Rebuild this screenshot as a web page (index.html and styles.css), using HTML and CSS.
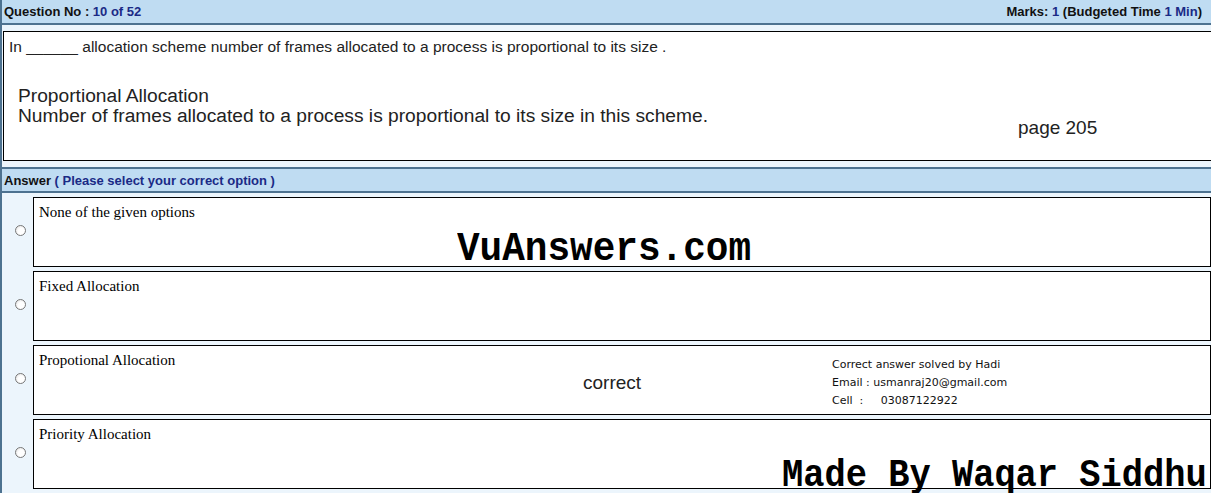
FILE: index.html
```html
<!DOCTYPE html>
<html>
<head>
<meta charset="utf-8">
<link rel="stylesheet" href="styles.css">
</head>
<body>
<div class="page">
  <div class="bar head">
    <span>Question No : <span class="hl">10 of 52</span></span>
    <span>Marks: <span class="hl">1</span> (Budgeted Time <span class="hl">1 Min</span>)</span>
  </div>
  <div class="qwrap">
    <div class="qbox">
      <div class="qline">In ______ allocation scheme number of frames allocated to a process is proportional to its size .</div>
      <div class="expl">
        <div>Proportional Allocation</div>
        <div>Number of frames allocated to a process is proportional to its size in this scheme.</div>
      </div>
      <div class="pageref">page 205</div>
    </div>
  </div>
  <div class="bar ans">
    <span>Answer <span class="hl">( Please select your correct option )</span></span>
  </div>
  <div class="options">
    <div class="opt">
      <span class="radio"></span>
      <div class="obox">
        <div class="otext">None of the given options</div>
        <div class="brand">VuAnswers.com</div>
      </div>
    </div>
    <div class="opt">
      <span class="radio"></span>
      <div class="obox"><div class="otext">Fixed Allocation</div></div>
    </div>
    <div class="opt">
      <span class="radio"></span>
      <div class="obox">
        <div class="otext">Propotional Allocation</div>
        <div class="correct">correct</div>
        <div class="credit">
          <div>Correct answer solved by Hadi</div>
          <div>Email : usmanraj20@gmail.com</div>
          <div>Cell&nbsp; :&nbsp;&nbsp;&nbsp;&nbsp; 03087122922</div>
        </div>
      </div>
    </div>
    <div class="opt">
      <span class="radio"></span>
      <div class="obox"><div class="otext">Priority Allocation</div></div>
    </div>
  </div>
  <div class="made">Made By Waqar Siddhu</div>
</div>
</body>
</html>
```

FILE: styles.css
```css
html, body {
  margin: 0;
  padding: 0;
  overflow: hidden;
}
body {
  background: #ecf5fc;
  width: 1211px;
  height: 493px;
}
.page {
  position: relative;
  width: 1211px;
  height: 493px;
  border-left: 2px solid #4d7290;
  box-sizing: border-box;
  background: #ecf5fc;
  overflow: hidden;
}
.bar {
  display: flex;
  justify-content: space-between;
  align-items: center;
  background: #bfdcf2;
  border-bottom: 2px solid #4d7290;
  font-family: "Liberation Sans", Arial, sans-serif;
  font-weight: bold;
  font-size: 13px;
  color: #111;
  padding: 0 9px 0 2px;
}
.bar .hl { color: #1a2a86; }
.head { height: 23px; }
.qwrap {
  padding: 6px 0 6px 1px;
}
.qbox {
  position: relative;
  width: 1220px;
  height: 128px;
  background: #fff;
  border: 1px solid #000;
  font-family: "Liberation Sans", Arial, sans-serif;
  color: #222;
}
.qline {
  font-size: 15.5px;
  padding: 6px 0 0 5px;
  line-height: 17px;
}
.expl {
  font-size: 19.2px;
  line-height: 20px;
  padding: 31px 0 0 14px;
}
.pageref {
  position: absolute;
  left: 1014px;
  top: 85px;
  font-size: 19px;
}
.ans {
  height: 22px;
  border-top: 2px solid #4d7290;
}
.options {
  display: flex;
  flex-direction: column;
  gap: 4px;
  padding-top: 4px;
}
.opt {
  display: flex;
  align-items: flex-start;
  height: 70px;
}
.radio {
  display: block;
  width: 9px;
  height: 9px;
  margin: 28px 7px 0 13px;
  border-radius: 50%;
  border: 1px solid #777;
  background: radial-gradient(circle at 60% 60%, #fff 40%, #ddd 100%);
  flex: none;
}
.obox {
  position: relative;
  width: 1220px;
  height: 68px;
  border: 1px solid #000;
  background: #fff;
  box-sizing: content-box;
  font-family: "Liberation Serif", "Times New Roman", serif;
  font-size: 15px;
  color: #000;
}
.otext {
  padding: 6px 0 0 5px;
  line-height: 17px;
}
.brand {
  position: absolute;
  left: 423px;
  top: 32px;
  font-family: "Liberation Mono", "Courier New", monospace;
  font-weight: bold;
  font-size: 37.7px;
  line-height: 38px;
  white-space: nowrap;
  color: #000;
  transform: scaleY(1.08);
}
.correct {
  position: absolute;
  left: 549px;
  top: 26px;
  font-family: "Liberation Sans", Arial, sans-serif;
  font-size: 19px;
  color: #222;
}
.credit {
  position: absolute;
  left: 798px;
  top: 10px;
  font-family: "DejaVu Sans", Tahoma, sans-serif;
  font-size: 11px;
  line-height: 18px;
  color: #111;
  white-space: nowrap;
}
.made {
  position: absolute;
  left: 780px;
  top: 462px;
  font-family: "Liberation Mono", "Courier New", monospace;
  font-weight: bold;
  font-size: 35.4px;
  line-height: 30px;
  white-space: nowrap;
  color: #000;
  transform: scaleY(1.08);
  transform-origin: 0 78%;
}
```
